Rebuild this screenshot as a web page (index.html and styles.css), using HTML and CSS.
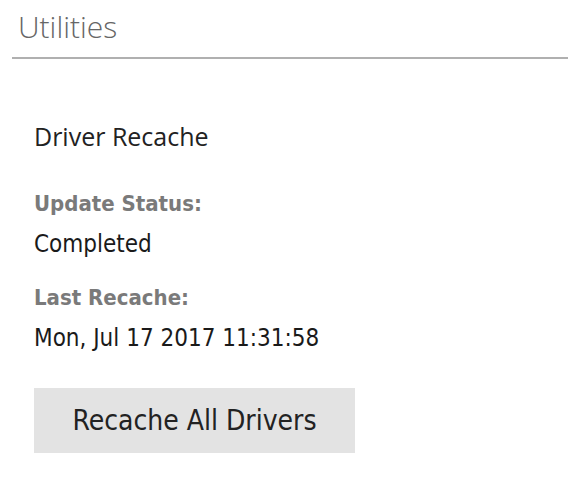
FILE: index.html
```html
<!DOCTYPE html>
<html lang="en">
<head>
    <meta charset="UTF-8">
    <meta name="viewport" content="width=device-width, initial-scale=1.0">
    <title>Utilities</title>
    <link rel="stylesheet" href="styles.css">
</head>
<body>
    <div class="page">
        <h1 class="page-title">Utilities</h1>
        <div class="panel">
            <h2 class="panel-title">Driver Recache</h2>
            <dl class="status">
                <dt>Update Status:</dt>
                <dd>Completed</dd>
                <dt>Last Recache:</dt>
                <dd>Mon, Jul 17 2017 11:31:58</dd>
            </dl>
            <button class="recache-button" type="button">Recache All Drivers</button>
        </div>
    </div>
</body>
</html>
```

FILE: styles.css
```css
body {
    margin: 0;
    padding: 0;
    background: #fff;
    font-family: "DejaVu Sans Condensed", "DejaVu Sans", sans-serif;
    color: #222;
}

.page {
    padding-left: 12px;
}

.page-title {
    margin: 0;
    padding: 9px 0 12px 6px;
    font-family: "Open Sans", sans-serif;
    font-weight: 300;
    font-size: 30px;
    line-height: 36px;
    color: #666;
    border-bottom: 2px solid #b0b0b0;
}

.panel {
    padding: 61px 0 0 22px;
}

.panel-title {
    margin: 0 0 37px;
    font-family: "Open Sans", sans-serif;
    font-weight: 400;
    font-size: 25px;
    line-height: 32px;
    color: #222;
}

.status {
    margin: 0;
}

.status dt {
    font-weight: bold;
    font-size: 22px;
    line-height: 30px;
    color: #7a7a7a;
}

.status dd {
    margin: 10px 0 24px;
    font-size: 24px;
    line-height: 30px;
    color: #1a1a1a;
}

.status dd:last-child {
    margin-bottom: 0;
}

.recache-button {
    display: block;
    width: 321px;
    height: 65px;
    margin-top: 35px;
    padding: 0;
    border: none;
    background: #e3e3e3;
    font-family: "DejaVu Sans Condensed", "DejaVu Sans", sans-serif;
    font-size: 28px;
    color: #222;
}
```
